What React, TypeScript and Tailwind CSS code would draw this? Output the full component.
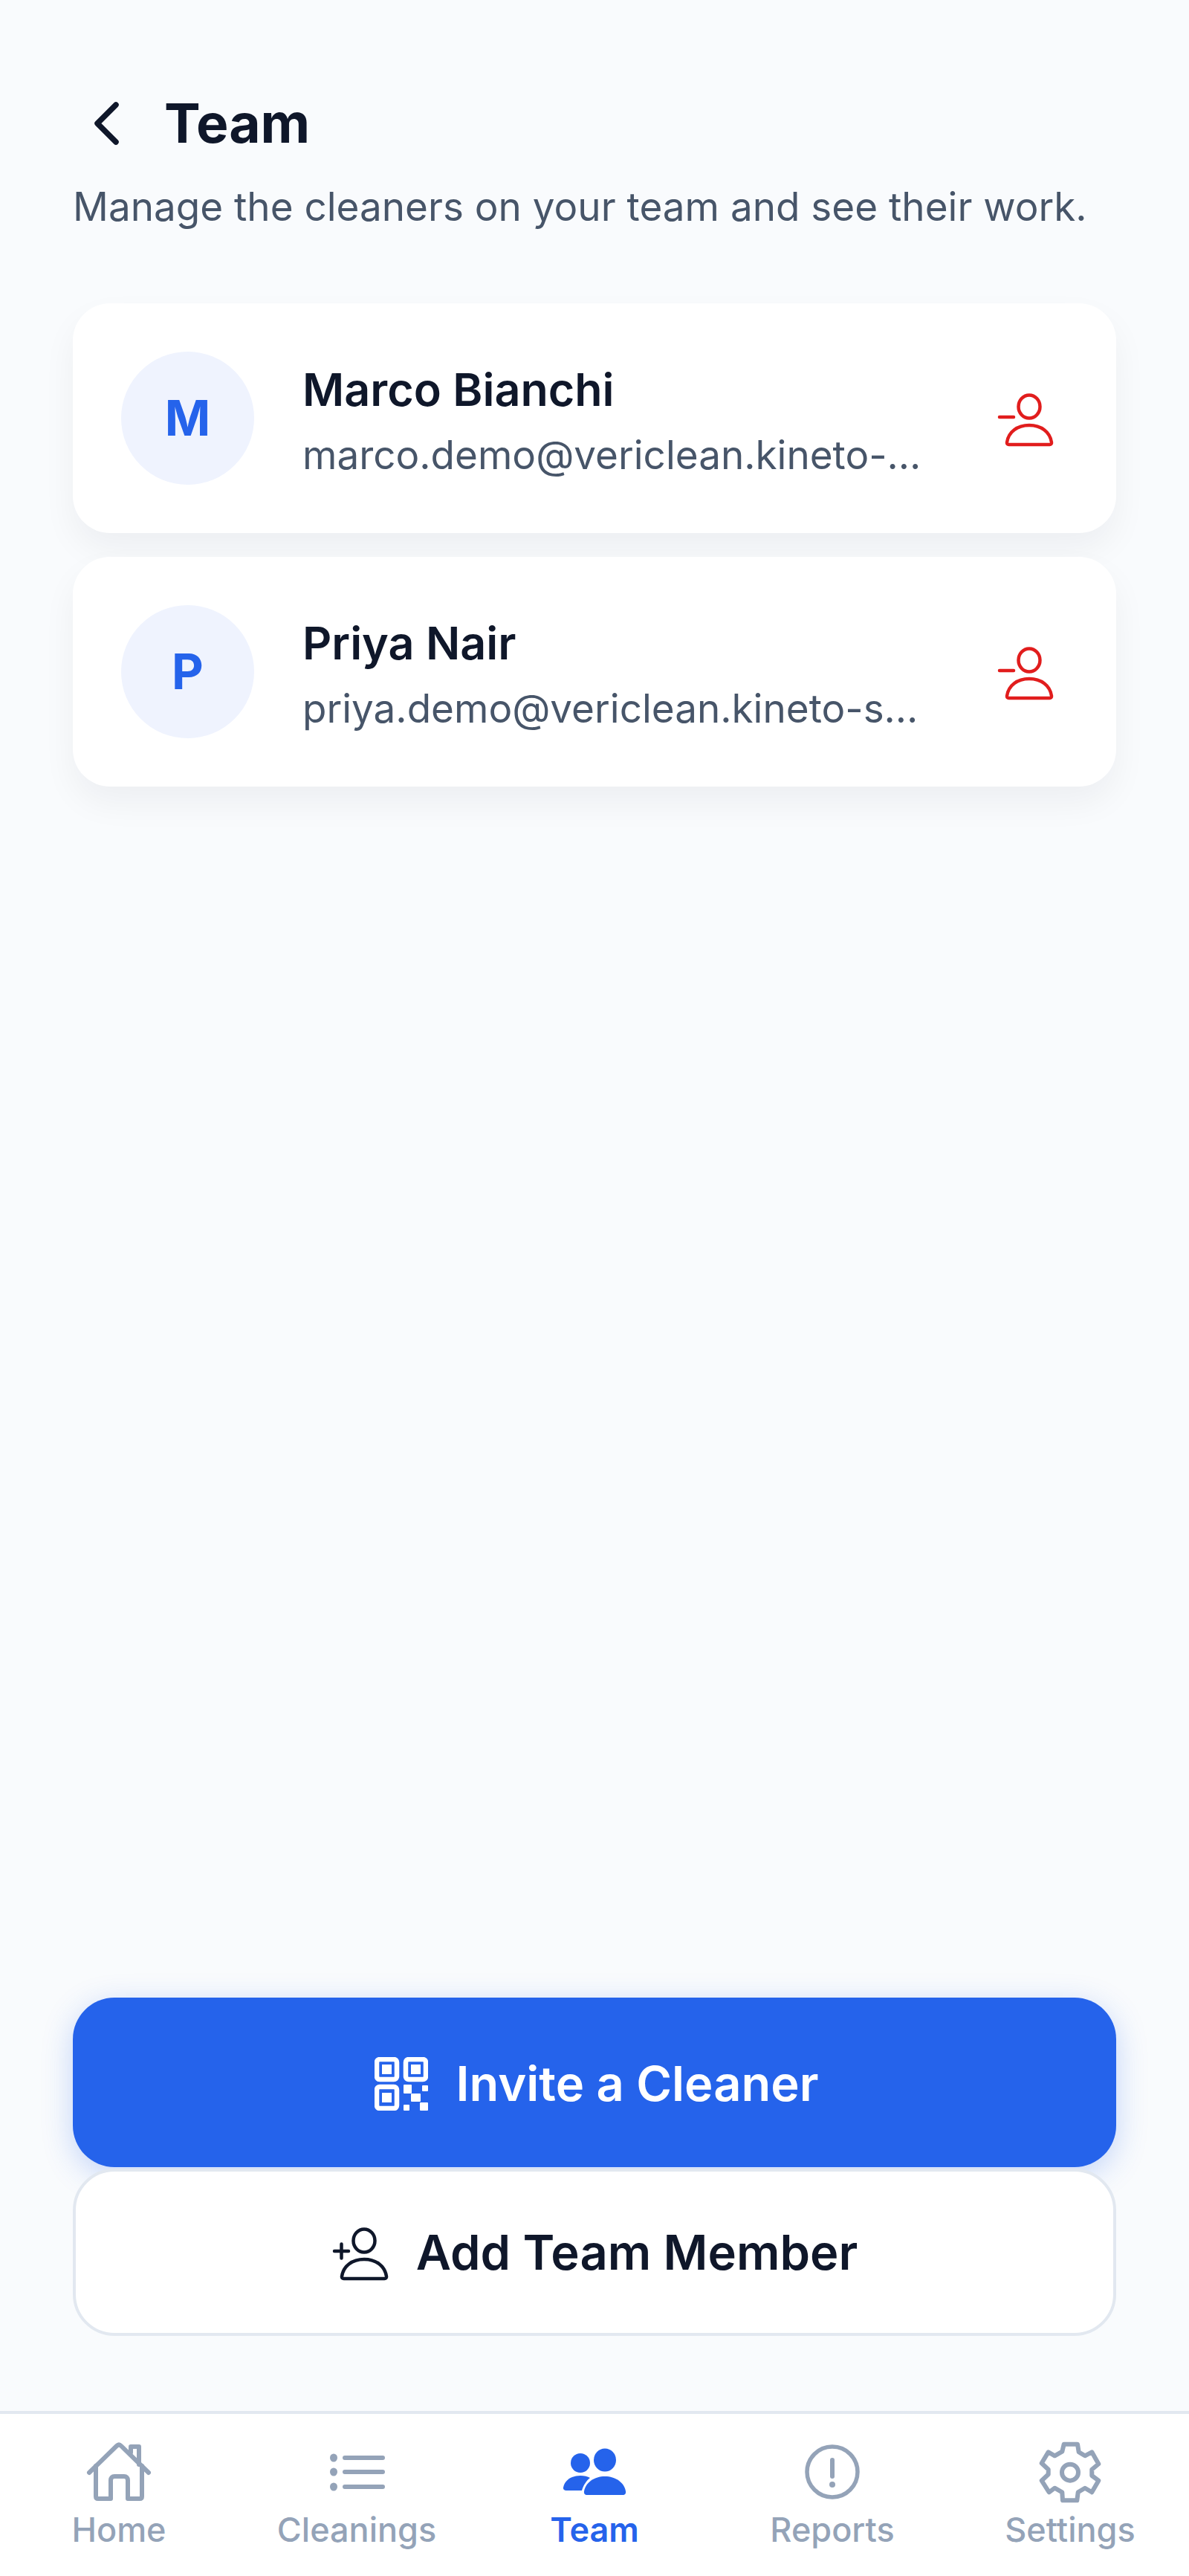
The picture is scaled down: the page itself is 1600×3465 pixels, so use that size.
import React from "react";

const font = { fontFamily: "Inter, sans-serif" };

function UserIcon({ kind, color }: { kind: "plus" | "minus"; color: string }) {
  return (
    <svg width="84" height="84" viewBox="0 0 84 84" fill="none" stroke={color} strokeWidth="4.5" strokeLinecap="round" strokeLinejoin="round">
      <ellipse cx="44" cy="26" rx="14.5" ry="15.5" />
      <path d="M14 74c2-14 14-23 30-23s28 9 30 23c.3 2-1 3-2.5 3h-55c-1.500 0-2.800-1-2.500-3z" />
      {kind === "plus" ? <path d="M4 40h19M13.500 30.500v19" /> : <path d="M4 40h19" />}
    </svg>
  );
}

function Card({ initial, name, email }: { initial: string; name: string; email: string }) {
  return (
    <div className="flex h-[309px] items-center rounded-[50px] bg-white pl-[65px] pr-[77px] shadow-[0_22px_46px_rgba(15,23,42,0.05)]">
      <div className="flex h-[179px] w-[179px] shrink-0 items-center justify-center rounded-full bg-[#eff3fe] text-[66px] font-bold text-[#2563eb]">
        {initial}
      </div>
      <div className="ml-[65px] min-w-0 flex-1 pt-[10px]">
        <div className="text-[61px] leading-[88px] font-semibold text-[#0f172a]">{name}</div>
        <div className="truncate text-[53px] leading-[88px] text-[#475569]">{email}</div>
      </div>
      <div className="ml-[97px] shrink-0">
        <UserIcon kind="minus" color="#e11d1d" />
      </div>
    </div>
  );
}

function Nav({ label, active, children }: { label: string; active?: boolean; children: React.ReactNode }) {
  return (
    <div className={`flex flex-1 flex-col items-center ${active ? "text-[#2563eb]" : "text-[#94a3b8]"}`}>
      <div className="flex h-[88px] items-center justify-center">{children}</div>
      <div className={`mt-[2px] text-[45px] leading-[64px] ${active ? "font-semibold" : "font-medium"}`}>{label}</div>
    </div>
  );
}

export default function App() {
  return (
    <div className="flex h-[3465px] w-[1600px] flex-col overflow-hidden bg-[#f9fbfd]" style={font}>
      <main className="flex min-h-0 flex-1 flex-col px-[98px]">
        <header className="mt-[124px] flex h-[84px] items-center pl-[28px]">
          <svg width="34" height="58" viewBox="0 0 34 58" fill="none" stroke="#0f172a" strokeWidth="7.500" strokeLinecap="round" strokeLinejoin="round">
            <path d="M30 4 5 29l25 25" />
          </svg>
          <h1 className="ml-[61px] text-[73px] leading-[84px] font-bold text-[#0f172a]">Team</h1>
        </header>
        <p className="mt-[30px] text-[53px] leading-[80px] whitespace-nowrap text-[#475569]">Manage the cleaners on your team and see their work.</p>
        <div className="mt-[90px] flex flex-col gap-[32px]">
          <Card initial="M" name="Marco Bianchi" email="marco.demo@vericlean.kineto-solutions.com" />
          <Card initial="P" name="Priya Nair" email="priya.demo@vericlean.kineto-solutions.com" />
        </div>
        <div className="mt-auto flex flex-col gap-[2px] pb-[101px]">
          <button className="flex h-[228px] items-center justify-center gap-[38px] rounded-[56px] bg-[#2563eb] pt-[4px] pl-[5px] text-[65px] font-semibold text-white shadow-[0_10px_40px_rgba(37,99,235,0.25)]">
            <svg width="72" height="72" viewBox="0 0 72 72" fill="none" stroke="white" strokeWidth="6.500" strokeLinejoin="round">
              <rect x="3" y="3" width="27" height="27" rx="4" />
              <rect x="42" y="3" width="27" height="27" rx="4" />
              <rect x="3" y="40" width="27" height="29" rx="4" />
              <g fill="white" stroke="none">
                <rect x="10" y="10" width="13" height="13" />
                <rect x="49" y="10" width="13" height="13" />
                <rect x="10" y="48" width="13" height="13" />
                <rect x="39" y="37" width="11" height="12" rx="1" />
                <rect x="64" y="38" width="8" height="8" rx="1" />
                <rect x="49" y="49" width="13" height="11" rx="1" />
                <rect x="39" y="64" width="8" height="8" rx="1" />
                <rect x="61" y="61" width="11" height="11" rx="1" />
              </g>
            </svg>
            Invite a Cleaner
          </button>
          <button className="flex h-[225px] items-center justify-center gap-[30px] rounded-[56px] border-[4px] border-[#e2e8f0] bg-white text-[65px] font-semibold text-[#0f172a]">
            <UserIcon kind="plus" color="#0f172a" />
            Add Team Member
          </button>
        </div>
      </main>
      <nav className="flex h-[222px] shrink-0 border-t-[4px] border-[#e2e8f0] bg-white pt-[34px]">
        <Nav label="Home">
          <svg width="88" height="88" viewBox="0 0 88 88" fill="none" stroke="currentColor" strokeWidth="6" strokeLinecap="round" strokeLinejoin="round">
            <path d="M4 45 41 9c2-2 4-2 6 0l37 36" />
            <path d="M13 36v41c0 2 1 3 3 3h17V55c0-3 2-5 5-5h13c3 0 5 2 5 5v25h16c2 0 3-1 3-3V36" />
            <path d="M60 18V10h11v24" />
          </svg>
        </Nav>
        <Nav label="Cleanings">
          <svg width="78" height="60" viewBox="0 0 78 60" fill="none" stroke="currentColor" strokeWidth="6" strokeLinecap="round">
            <path d="M23 11h51M23 30h51M23 50h51" />
            <ellipse cx="8" cy="11" rx="5" ry="5.500" fill="currentColor" stroke="none" />
            <ellipse cx="8" cy="30" rx="5" ry="5.500" fill="currentColor" stroke="none" />
            <ellipse cx="8" cy="50" rx="5" ry="5.500" fill="currentColor" stroke="none" />
          </svg>
        </Nav>
        <Nav label="Team" active>
          <svg width="86" height="70" viewBox="0 0 86 70" fill="currentColor">
            <circle cx="24" cy="23" r="13" />
            <ellipse cx="57" cy="19" rx="15" ry="15.500" />
            <path d="M1 56C3 46 12 40 24 40c5 0 10 1 13 3-5 4-9 10-11 17H5c-3 0-4.500-2-4-4z" />
            <path d="M29 61c2-12 14-20 28-20s26 8 28 20c.5 3-1 5-4 5H33c-3 0-4.500-2-4-5z" />
          </svg>
        </Nav>
        <Nav label="Reports">
          <svg width="78" height="78" viewBox="0 0 78 78" fill="none" stroke="currentColor" strokeWidth="5.500" strokeLinecap="round">
            <circle cx="39" cy="39" r="34" />
            <path d="M39 23v22" strokeWidth="6" />
            <circle cx="39" cy="56" r="4" fill="currentColor" stroke="none" />
          </svg>
        </Nav>
        <Nav label="Settings">
          <svg width="88" height="88" viewBox="0 0 88 88" fill="none" stroke="currentColor" strokeWidth="6" strokeLinejoin="round">
            <path d="M35.700 6.700H54L55.700 17.300 64 22.300 73.300 17.300 82.300 33.300 73.300 40.700V49L82.300 55.700 73.300 71.300 64 65.700 54.700 71.300 53.300 82.300H34L33.300 71.300 23.300 65.700 15.700 71.300 5.700 55.700 14.700 47.300V40.700L5.700 32.300 14.700 17.300 23.300 22.300 33.300 16.700Z" />
            <circle cx="44" cy="44.700" r="11" />
          </svg>
        </Nav>
      </nav>
    </div>
  );
}
